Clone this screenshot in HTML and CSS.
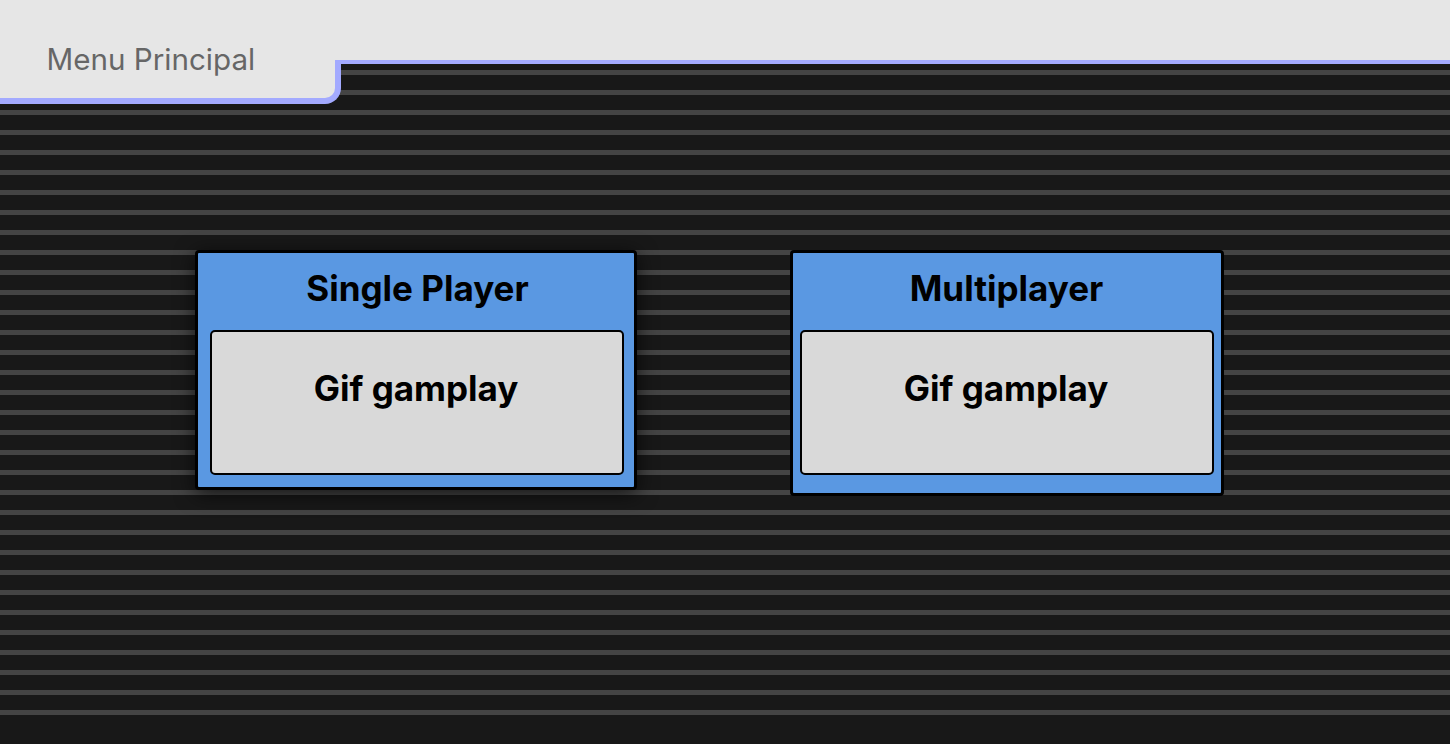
FILE: index.html
```html
<!DOCTYPE html>
<html lang="es">
<head>
<meta charset="utf-8">
<title>Menu Principal</title>
<link rel="stylesheet" href="styles.css">
</head>
<body>
<header class="topbar">
  <div class="tab"><span class="tab-label">Menu Principal</span></div>
</header>
<main class="modes">
  <section class="card card-single">
    <h2 class="card-title">Single Player</h2>
    <div class="preview">Gif gamplay</div>
  </section>
  <section class="card card-multi">
    <h2 class="card-title">Multiplayer</h2>
    <div class="preview">Gif gamplay</div>
  </section>
</main>
</body>
</html>
```

FILE: styles.css
```css
* { box-sizing: border-box; }
body {
  margin: 0;
  height: 744px;
  overflow: hidden;
  font-family: Inter, "Liberation Sans", sans-serif;
  background-color: #181818;
  background-image: repeating-linear-gradient(to bottom, transparent 0, transparent 10px, #444 10px, #444 15px, transparent 15px, transparent 20px);
  background-size: 100% 724px;
  background-repeat: no-repeat;
}
.topbar {
  display: flex;
  align-items: flex-start;
  height: 64px;
  background: #e6e6e6;
  border-bottom: 4px solid #a3aaff;
}
.tab {
  flex: none;
  width: 341px;
  height: 44px;
  margin-top: 60px;
  padding-left: 46.5px;
  background: #e6e6e6;
  border-right: 6px solid #a3aaff;
  border-bottom: 6px solid #a3aaff;
  border-bottom-right-radius: 16px;
  color: #666;
  font-size: 29.6px;
  line-height: 0;
  white-space: nowrap;
}
.tab-label {
  display: block;
  margin-top: -1px;
}
.modes {
  display: flex;
  align-items: flex-start;
  padding: 186px 0 0 195px;
  gap: 153px;
}
.card {
  height: 240px;
  background: #5a98e2;
  border: 3px solid #000;
  border-radius: 4px;
  display: flex;
  flex-direction: column;
}
.card-single {
  width: 442px;
  padding: 0 9px 0 12px;
  box-shadow: 0 4px 20px rgba(0, 0, 0, 0.7);
}
.card-multi {
  width: 434px;
  height: 246px;
  padding: 0 6px 0 7px;
}
.card-multi .card-title {
  padding-right: 2px;
}
.card-title {
  margin: 0;
  height: 77px;
  line-height: 71px;
  text-align: center;
  font-size: 35px;
  font-weight: 700;
  color: #000;
}
.preview {
  width: 414px;
  height: 145px;
  background: #d9d9d9;
  border: 2px solid #000;
  border-radius: 5px;
  padding: 36px 2px 0 0;
  line-height: 41px;
  text-align: center;
  font-size: 35px;
  font-weight: 700;
  color: #000;
}
```
